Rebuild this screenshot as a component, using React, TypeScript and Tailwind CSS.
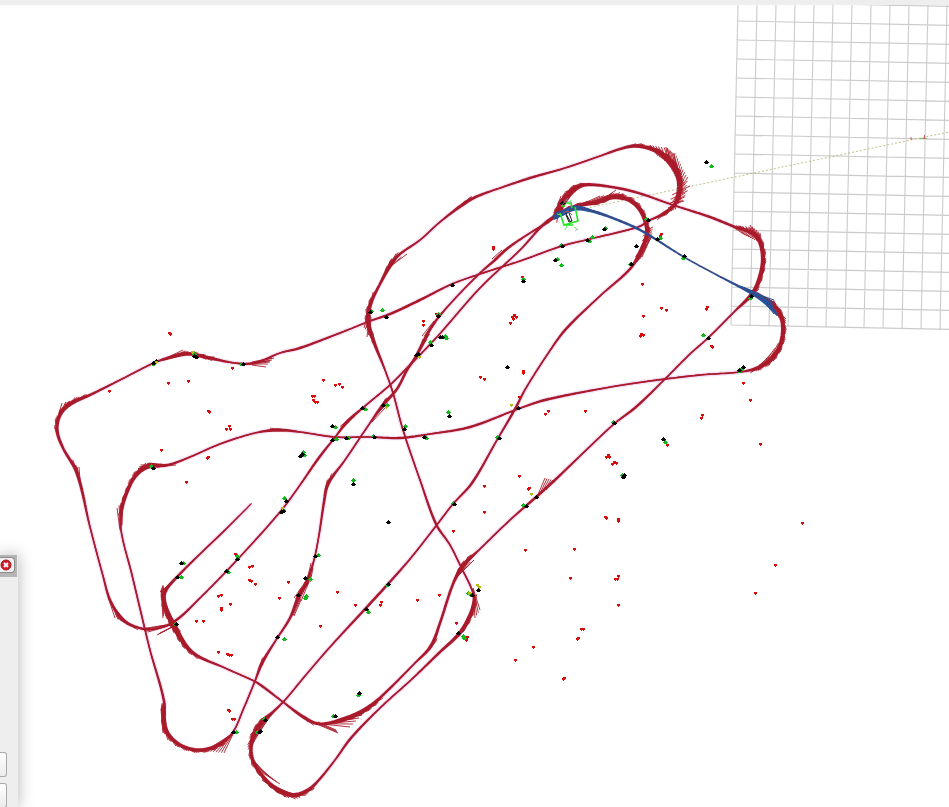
type P = [number, number, number];

const INK = '#a91b2a';

// Travelled tracks: x, y and the breadth of the arrow trail at that point.
const TRACKS: P[][] = [
  // upper outer loop, then down to the lower right hook
  [[650,220,2],[663,214,4],[675,204,4],[679,192,6],[679,178,7],[672,164,8],[660,153,6],[648,148,4],[634,146,4],[620,149,3],[600,156,2],[565,168,2],[530,178,3],[500,188,2],[478,196,3],[465,203,4],[440,222,2],[420,240,2],[400,254,3],[391,264,5],[380,284,3],[371,303,4],[368,320,5],[374,342,4],[385,370,2],[393,393,2],[403,430,2],[420,480,2],[436,524,3],[450,545,2],[461,567,2],[472,590,2],[474,602,4],[468,620,5],[458,635,4],[440,652,3],[412,679,2],[380,708,2],[351,738,3],[335,760,2],[318,781,3],[308,790,4],[295,795,5],[282,792,6],[268,782,4],[254,763,4],[251,748,4],[254,735,6],[262,722,6],[273,712,3],[285,700,2],[305,676,2],[330,647,2],[366,608,3],[388,584,3],[410,559,2],[436,526,2],[453,504,2],[472,483,3],[497,440,2],[515,409,3],[526,388,2],[549,352,2],[566,329,3],[600,296,2],[630,269,3],[640,252,4],[647,234,5],[645,220,5],[638,207,5],[627,199,5],[612,197,6],[597,202,5],[577,206,4],[560,213,4],[545,224,3],[530,233,2],[508,248,3],[495,260,3],[479,274,2],[450,304,2],[432,326,3],[423,343,4],[415,358,3],[407,370,3],[397,389,3],[383,405,4],[370,423,2],[345,460,2],[328,484,4],[324,502,3],[319,535,2],[314,560,2],[307,581,4],[298,598,4],[290,618,3],[276,640,2],[262,663,4],[255,681,2],[243,710,2],[233,732,2],[220,744,4],[201,750,4],[182,746,4],[168,734,5],[164,720,5],[164,701,3],[150,650,2],[142,617,2],[132,575,2],[121,530,2],[122,508,4],[131,483,4],[139,472,5],[149,466,6],[168,465,3],[190,457,2],[220,444,2],[255,433,2],[278,430,4],[300,432,2],[335,437,2],[370,437,2],[400,438,3],[430,434,2],[470,427,3],[518,409,2],[545,400,3],[605,388,2],[650,381,2],[700,375,2],[740,372,2],[757,368,4],[770,360,6],[779,348,5],[783,332,5],[781,316,5],[772,304,5],[757,294,4]],
  // inner small loop and the right side run
  [[555,218,7],[563,202,8],[573,190,7],[584,185,4],[605,186,3],[635,192,3],[673,205,2],[710,217,3],[735,227,3],[752,233,5],[760,242,5],[763,260,5],[759,280,5],[752,294,5],[735,311,2],[708,338,2],[690,354,2],[663,381,2],[636,407,3],[614,424,2],[580,456,2],[555,480,3],[535,498,3],[510,520,2],[480,549,2],[463,566,5],[453,584,3],[440,623,3],[431,646,4],[415,663,2],[382,696,3],[366,709,5],[347,718,5],[320,724,3],[305,718,4],[283,702,2],[262,686,3],[254,681,2],[225,668,2],[192,652,4],[174,626,7],[165,605,5],[165,592,4],[178,576,3],[200,554,2],[225,530,2],[251,504,1]],
  // long western loop
  [[650,220,3],[638,227,2],[590,239,2],[562,246,2],[520,261,2],[480,274,2],[452,284,2],[420,300,3],[390,314,3],[370,321,2],[345,331,2],[300,348,3],[280,353,2],[255,363,3],[235,363,2],[205,357,4],[190,354,4],[175,356,4],[156,362,2],[120,380,2],[90,395,3],[70,404,5],[60,415,4],[57,430,4],[63,448,3],[77,473,4],[90,527,2],[103,576,2],[110,600,3],[122,619,4],[136,627,3],[155,629,2],[175,621,3],[200,598,2],[237,560,2],[280,512,2],[300,485,2],[318,459,3],[336,436,2],[347,422,4],[365,406,2],[390,385,2],[405,370,2],[436,338,2],[480,288,2],[520,250,2],[545,223,3],[560,213,3]],
];

const PLANNED: P[] = [[553,218,5],[563,213,6],[575,208,6],[588,210,4],[610,217,3],[640,230,3],[684,257,2],[715,274,2],[742,288,3],[757,296,5],[768,304,6],[777,315,2]];

// Fans of heading arrows: x and y of the first base, first tip, last base, last tip, count.
type Fan = [number, number, number, number, number, number, number, number, number];
const FANS: Fan[] = [
  [658,156,650,145,672,166,667,148,7],
  [668,162,666,147,680,177,673,153,6],
  [672,170,675,153,680,186,686,175,9],
  [678,192,688,177,670,205,684,201,7],
  [672,195,690,186,668,208,683,200,4],
  [745,235,730,225,759,242,752,227,8],
  [756,238,750,225,763,250,760,233,6],
  [768,301,761,295,779,318,774,301,6],
  [772,306,774,300,783,325,780,312,5],
  [782,338,775,354,760,369,751,371,7],
  [391,266,407,254,388,268,396,260,3],
  [368,312,364,328,374,338,369,333,5],
  [370,313,367,337,371,317,370,333,3],
  [492,259,502,250,496,260,507,249,3],
  [422,336,434,321,426,337,436,322,3],
  [252,362,272,358,252,365,266,367,4],
  [250,363,274,358,250,364,270,362,3],
  [160,361,183,350,165,360,190,353,4],
  [58,417,62,403,66,407,88,396,8],
  [78,474,71,463,80,480,79,467,3],
  [120,530,117,508,122,525,123,500,4],
  [138,470,146,463,152,467,176,465,5],
  [371,420,384,407,372,422,385,408,2],
  [537,497,545,478,546,490,553,480,5],
  [160,592,178,577,164,590,174,581,4],
  [163,618,161,590,166,608,163,585,6],
  [108,597,115,618,122,619,138,630,8],
  [140,629,166,625,148,632,174,624,5],
  [157,635,176,625,160,633,172,627,3],
  [163,733,161,709,165,718,162,703,6],
  [205,751,229,736,224,753,234,732,8],
  [294,598,306,581,301,601,309,582,5],
  [292,615,300,598,294,616,301,600,3],
  [307,581,311,563,310,582,313,568,3],
  [312,722,338,733,318,722,336,730,4],
  [322,724,350,727,328,723,362,715,5],
  [473,588,480,610,473,590,475,618,4],
  [465,624,475,606,469,620,473,602,4],
  [262,780,280,792,270,785,300,797,6],
  [251,748,254,729,260,731,272,714,7],
  [252,758,263,773,263,773,280,784,6],
  [632,267,640,256,642,257,651,237,7],
  [643,232,653,227,641,254,651,238,6],
  [580,205,600,196,606,199,624,194,7],
  [603,199,616,190,622,198,636,203,6],
  [553,218,561,196,563,203,580,186,8],
  [454,580,460,567,459,575,474,560,5],
];
const BLUE_FANS: Fan[] = [
  [740,286,756,293,748,289,762,296,6],
  [760,295,774,300,765,303,774,314,7],
  [555,213,575,207,555,219,570,210,6],
];

// Landmark sightings
const RED = `169,333 170,334 168,383 188,381 109,391 208,411 209,412 226,429 230,429 229,426 161,450 208,457 207,458 186,482 232,368 493,247 493,249 522,277 512,317 514,315 513,319 516,317 510,323 423,321 423,325 436,314 323,380 335,385 339,384 342,387 312,396 314,396 313,400 315,402 317,402 480,377 484,379 523,371 523,373 519,397 548,411 545,414 585,411 661,234 660,236 642,284 661,308 666,310 643,316 640,336 641,334 643,335 707,307 706,309 711,346 712,347 743,383 750,400 702,415 701,418 760,444 667,445 606,457 608,455 609,457 612,464 614,462 616,463 605,517 606,518 618,519 618,521 802,523 775,565 755,593 519,476 528,489 529,488 484,486 484,512 453,531 525,550 574,549 570,578 618,576 617,579 615,579 618,605 583,629 581,629 577,639 578,638 533,647 515,660 563,679 564,678 439,595 417,600 381,602 380,605 355,605 337,592 320,626 279,598 288,582 456,623 464,637 467,637 466,640 249,567 252,566 249,580 251,581 255,584 218,596 221,595 230,604 221,608 221,610 196,621 203,621 218,652 227,654 229,655 231,655 228,710 229,711 232,719 234,719 235,554`;
const BLACK = `706,162 562,203 648,220 604,229 587,240 562,246 636,246 657,239 684,256 555,260 523,281 631,264 751,296 708,338 743,367 739,370 452,285 370,312 386,317 438,316 431,345 442,337 440,337 416,355 418,354 507,367 449,416 362,408 383,405 404,429 424,437 518,408 499,438 332,426 332,440 346,438 374,437 302,454 300,456 194,356 196,357 153,363 156,361 243,364 153,468 353,484 388,522 454,504 526,506 536,497 614,423 663,439 624,475 623,477 286,501 281,512 283,511 315,556 181,563 177,577 237,559 226,571 176,624 305,578 298,595 277,637 388,584 366,609 478,590 472,595 458,633 359,693 335,716 265,720 260,731 259,732 233,732`;
const GREEN = `711,166 646,219 605,228 592,237 589,241 561,245 660,238 683,258 557,259 561,265 523,279 630,264 750,298 703,335 741,369 739,371 371,311 382,310 438,314 430,342 446,338 445,336 418,356 448,412 365,409 387,405 405,426 426,438 497,437 335,427 336,439 348,438 373,436 303,452 304,455 194,354 153,364 241,364 151,466 353,480 453,503 523,505 613,422 665,442 622,475 284,498 283,510 318,555 183,563 181,577 237,556 228,572 175,624 310,579 305,598 306,596 284,639 387,585 368,612 468,593 471,595 464,638 463,636 358,695 333,716 264,719 257,732 236,732`;
const YELLOW = `192,352 156,362 282,508 419,357 386,407 511,405 531,494 477,585 479,587 469,593`;

function smooth(points: P[]): P[] {
  const out: P[] = [];
  for (let i = 0; i < points.length - 1; i++) {
    const a = points[Math.max(0, i - 1)];
    const b = points[i];
    const c = points[i + 1];
    const d = points[Math.min(points.length - 1, i + 2)];
    const length = Math.hypot(c[0] - b[0], c[1] - b[1]);
    const steps = Math.max(2, Math.round(length / 3));
    for (let s = 0; s < steps; s++) {
      const t = s / steps;
      // Tangents are scaled to the segment so that uneven spacing leaves no loops.
      const m1 = length / (Math.hypot(c[0] - a[0], c[1] - a[1]) || 1);
      const m2 = length / (Math.hypot(d[0] - b[0], d[1] - b[1]) || 1);
      const h1 = 2 * t ** 3 - 3 * t ** 2 + 1;
      const h2 = t ** 3 - 2 * t ** 2 + t;
      const h3 = 1 - h1;
      const h4 = t ** 3 - t ** 2;
      out.push([
        h1 * b[0] + h2 * m1 * (c[0] - a[0]) + h3 * c[0] + h4 * m2 * (d[0] - b[0]),
        h1 * b[1] + h2 * m1 * (c[1] - a[1]) + h3 * c[1] + h4 * m2 * (d[1] - b[1]),
        b[2] + t * (c[2] - b[2]),
      ]);
    }
  }
  out.push(points[points.length - 1]);
  return out;
}

function centreLine(points: P[]) {
  return 'M' + smooth(points).map((p) => `${p[0].toFixed(1)} ${p[1].toFixed(1)}`).join('L');
}

function ribbon(points: P[]) {
  const s = smooth(points);
  let d = '';
  for (let i = 0; i < s.length - 1; i++) {
    const [x, y] = s[i];
    const [u, v] = s[i + 1];
    const w = s[i][2] * 0.85;
    const z = s[i + 1][2] * 0.85;
    const l = Math.hypot(u - x, v - y) || 1;
    const nx = -(v - y) / l / 2;
    const ny = (u - x) / l / 2;
    const ex = (u - x) / l;
    const ey = (v - y) / l;
    d += `M${x + nx * w} ${y + ny * w}L${u + nx * z + ex} ${v + ny * z + ey}L${u - nx * z + ex} ${v - ny * z + ey}L${x - nx * w} ${y - ny * w}Z`;
  }
  return d;
}

// Heading arrows that leave the broad parts of a track along its tangent, on the outer side of the bend.
function barbs(points: P[]) {
  const s = smooth(points);
  let d = '';
  for (let i = 1; i < s.length - 1; i++) {
    const [x, y, w] = s[i];
    if (w < 3.8) continue;
    const dx = s[i + 1][0] - s[i - 1][0];
    const dy = s[i + 1][1] - s[i - 1][1];
    const l = Math.hypot(dx, dy) || 1;
    const turn = (x - s[i - 1][0]) * (s[i + 1][1] - y) - (y - s[i - 1][1]) * (s[i + 1][0] - x);
    const side = turn > 0 ? 1 : -1;
    const nx = (dy / l) * side;
    const ny = (-dx / l) * side;
    const reach = 5 + (i % 3) * 1.5;
    d += `M${x + nx * w * 0.2} ${y + ny * w * 0.2}L${x - (dx / l) * reach + nx * w * 0.5} ${y - (dy / l) * reach + ny * w * 0.5}`;
  }
  return d;
}

function fanPath(fans: Fan[]) {
  let d = '';
  for (const [a, b, c, e, f, g, h, k, n] of fans) {
    for (let i = 0; i < n; i++) {
      const t = i / (n - 1);
      d += `M${a + t * (f - a)} ${b + t * (g - b)}L${c + t * (h - c)} ${e + t * (k - e)}`;
    }
  }
  return d;
}

// A sighting is a small plus; wide ones get one more pixel to the left and above.
function dots(list: string, wide: boolean) {
  return list
    .split(' ')
    .map((pair) => {
      const [x, y] = pair.split(',').map(Number);
      return wide
        ? `M${x - 1} ${y - 1}h3v3h-3zM${x - 2} ${y}h1v1h-1zM${x} ${y - 2}h1v1h-1zM${x + 2} ${y}h1v1h-1z`
        : `M${x - 1} ${y - 1}h3v2h-1v1h-1v-1h-1z`;
    })
    .join('');
}

function Grid() {
  const down = Array.from({ length: 13 }, (_, i) => {
    const x = 731 + i * 19;
    return `M${x} ${325 + i * 0.4}L${x + 7} 5`;
  }).join('');
  const across = Array.from({ length: 18 }, (_, i) => {
    const y = 325 - i * 19;
    const x = 731 + i * 0.35;
    return `M${x} ${y}L949 ${y + 4.4}`;
  }).join('');
  return <path d={down + across} fill="none" stroke="#8c8c8c" strokeOpacity="0.45" strokeWidth="1.1" />;
}

function Robot() {
  return (
    <g fill="none">
      <path d="M560 213L564 225L578 221L575 207M561 206h4M566 203h5l1 5M573 225l-8 0" stroke="#1fe61f" strokeWidth="1.6" />
      <path d="M565 230l2-4M574 227l4 3M557 214l5 1M571 200l-1 5" stroke="#53ef53" />
      <path d="M566 215l3 7 3-1-3-8M565 212l5 9" stroke="#171717" />
      <path d="M566 200l6 3M568 198l-6 7M575 231l3-2" stroke="#999aca" strokeWidth="0.7" />
      <path d="M563 213l5-2 4 4" stroke="#bd5b60" />
    </g>
  );
}

function MapView() {
  return (
    <svg className="block h-full w-full bg-white" role="img" aria-label="Trajectory map">
      <Grid />
      <path d="M578 210L949 132" stroke="#b3b366" strokeWidth="0.8" strokeDasharray="2 2" />
      <path d="M920 138.500h7" stroke="#6aa860" strokeWidth="0.8" />
      <path d="M911 137v3M924.500 135v4" stroke="#c2504e" strokeWidth="0.9" />
      {TRACKS.map((track, i) => (
        <path key={i} d={centreLine(track)} fill="none" stroke="#e0a0ee" strokeOpacity="0.32" strokeWidth="4.5" />
      ))}
      <g stroke={INK} strokeWidth="0.9">
        <path d={fanPath(FANS)} />
      </g>
      {TRACKS.map((track, i) => (
        <g key={i}>
          <path d={barbs(track)} stroke={INK} strokeWidth="0.9" />
          <path d={ribbon(track)} fill={INK} />
          <path d={centreLine(track)} fill="none" stroke={INK} strokeWidth="1.2" />
        </g>
      ))}
      <path d={ribbon(PLANNED)} fill="#23539a" />
      <path d={fanPath(BLUE_FANS)} stroke="#23539a" />
      <path d={centreLine(PLANNED)} fill="none" stroke={INK} strokeWidth="0.8" strokeDasharray="2 4" />
      <g shapeRendering="crispEdges">
        <path d={dots(RED, false)} fill="#d90b0b" />
        <path d={dots(GREEN, true)} fill="#12bb1b" />
        <path d={dots(BLACK, true)} fill="#050505" />
        <path d={dots(YELLOW, false)} fill="#b9b914" />
      </g>
      <Robot />
    </svg>
  );
}

function DockedWindow() {
  return (
    <aside className="absolute bottom-0 left-0 top-[555px] w-[18px] bg-[#eeeeee] shadow-[0_0_16px_rgba(0,0,0,0.3)]">
      <header className="h-[22px] w-[17px] bg-[#b5b5b5] pt-[2px]">
        <button aria-label="Close" className="flex h-4 w-[15px] items-center rounded-r-sm border border-l-0 border-[#8c8c8c] bg-[#f2f2f2]">
          <svg viewBox="0 0 12 12" className="h-3 w-3">
            <circle cx="6" cy="6" r="5" fill="#cf2029" stroke="#b0131b" />
            <path d="M4 4l4 4M8 4l-4 4" stroke="white" strokeWidth="1.8" />
          </svg>
        </button>
      </header>
      <div className="flex flex-col gap-[6px] pt-[175px]">
        <button aria-label="First action" className="h-[25px] w-[7px] rounded-r-[3px] border border-l-0 border-[#aaaaaa] bg-linear-to-b from-white to-[#ececec]" />
        <button aria-label="Second action" className="h-[25px] w-[7px] rounded-r-[3px] border border-l-0 border-[#aaaaaa] bg-linear-to-b from-white to-[#ececec]" />
      </div>
    </aside>
  );
}

export default function App() {
  return (
    <main className="relative flex h-screen flex-col overflow-hidden bg-white">
      <div className="h-[5px] shrink-0 bg-[#eeeeee]" />
      <section className="-mt-[5px] min-h-0 flex-1 [clip-path:inset(5px_0_0_0)]">
        <MapView />
      </section>
      <DockedWindow />
    </main>
  );
}
